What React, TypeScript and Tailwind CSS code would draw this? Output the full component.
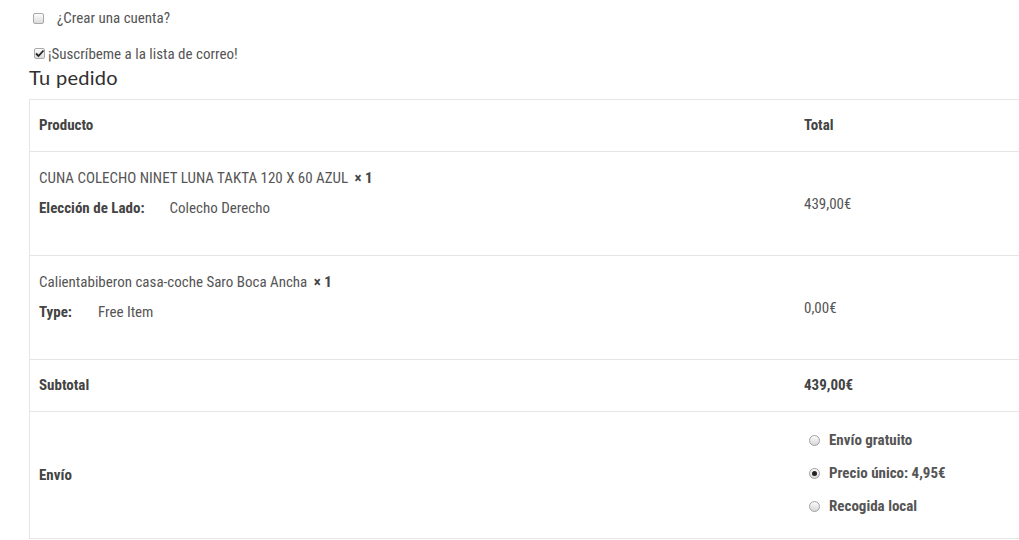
import React from 'react';

const cond = { fontFamily: '"Roboto Condensed", "Liberation Sans Narrow", "DejaVu Sans Condensed", Roboto, sans-serif' };

const Checkbox = ({ checked }: { checked?: boolean }) => (
  <span className="relative inline-block w-[11px] h-[11px] rounded-[2px] border border-[#a9a9a9] bg-gradient-to-b from-[#fcfcfc] to-[#dcdcdc] shrink-0">
    {checked && (
      <svg viewBox="0 0 11 11" className="absolute -left-px -top-px w-[11px] h-[11px]">
        <path d="M2 5.5 L4.5 8 L9.5 2.5" fill="none" stroke="#222" strokeWidth="1.8" />
      </svg>
    )}
  </span>
);

const Radio = ({ checked }: { checked?: boolean }) => (
  <span className="relative inline-flex items-center justify-center w-[11px] h-[11px] rounded-full border border-[#a0a0a0] bg-gradient-to-b from-[#fbfbfb] to-[#d8d8d8] shrink-0">
    {checked && <span className="w-[5px] h-[5px] rounded-full bg-[#222]" />}
  </span>
);

interface Item {
  name: string;
  label: string;
  value: string;
  labelGap: string;
  total: string;
}

const items: Item[] = [
  { name: 'CUNA COLECHO NINET LUNA TAKTA 120 X 60 AZUL', label: 'Elección de Lado:', value: 'Colecho Derecho', labelGap: 'mr-[25px]', total: '439,00€' },
  { name: 'Calientabiberon casa-coche Saro Boca Ancha', label: 'Type:', value: 'Free Item', labelGap: 'mr-[26px]', total: '0,00€' },
];

const shipping = [
  { label: 'Envío gratuito', checked: false },
  { label: 'Precio único: 4,95€', checked: true },
  { label: 'Recogida local', checked: false },
];

export default function App() {
  return (
    <div className="w-[1019px] h-[540px] overflow-hidden bg-white text-[15px] text-[#555]" style={cond}>
      <div className="pl-[33px] pt-[10px]">
        <label className="flex items-center h-[16px]">
          <Checkbox />
          <span className="ml-[13px] text-[#555]">¿Crear una cuenta?</span>
        </label>
        <label className="flex items-center h-[16px] mt-[20px]">
          <span className="ml-px"><Checkbox checked /></span>
          <span className="ml-[3px]">¡Suscríbeme a la lista de correo!</span>
        </label>
      </div>
      <h3
        className="ml-[29px] mt-[1px] text-[20px] leading-[28px] tracking-[0.3px] text-[#2f2f2f]"
        style={{ fontFamily: 'Lato, "Open Sans", sans-serif' }}
      >
        Tu pedido
      </h3>
      <div className="ml-[29px] mt-[8px] w-[1100px] border-l border-t border-[#e6e6e6]">
        <div className="flex h-[52px] items-center border-b border-[#e6e6e6] font-bold text-[#444]">
          <div className="w-[764px] pl-[9px]">Producto</div>
          <div className="pl-[10px]">Total</div>
        </div>
        {items.map((it) => (
          <div key={it.name} className="flex h-[104px] border-b border-[#e6e6e6]">
            <div className="w-[764px] pl-[9px] pt-[16px]">
              <div className="leading-[20px]">
                {it.name} <strong className="ml-[3px] font-bold text-[#444]">× 1</strong>
              </div>
              <div className="flex leading-[20px] mt-[10px]">
                <span className={`font-bold text-[#444] ${it.labelGap}`}>{it.label}</span>
                <span>{it.value}</span>
              </div>
            </div>
            <div className="flex items-center pl-[10px] pt-[2px]">{it.total}</div>
          </div>
        ))}
        <div className="flex h-[52px] items-center border-b border-[#e6e6e6] font-bold text-[#444]">
          <div className="w-[764px] pl-[9px]">Subtotal</div>
          <div className="pl-[10px]">439,00€</div>
        </div>
        <div className="flex h-[127px] items-center border-b border-[#e6e6e6]">
          <div className="w-[764px] pl-[9px] font-bold text-[#444]">Envío</div>
          <ul className="pl-[15px] pb-[3px] flex flex-col gap-[13px]">
            {shipping.map((s) => (
              <li key={s.label} className="flex items-center h-[20px] font-bold text-[#555]">
                <Radio checked={s.checked} />
                <span className="ml-[9px]">{s.label}</span>
              </li>
            ))}
          </ul>
        </div>
      </div>
    </div>
  );
}
